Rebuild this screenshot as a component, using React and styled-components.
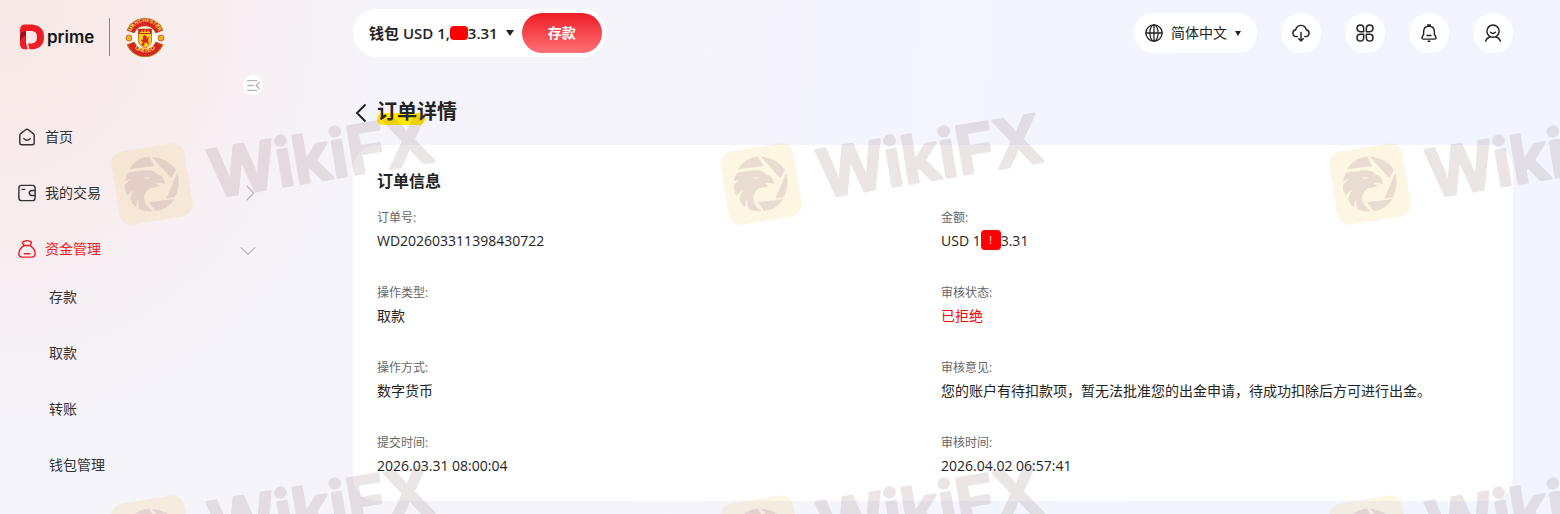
import React from 'react';
import styled, { createGlobalStyle, css } from 'styled-components';

const GlobalStyle = createGlobalStyle`
  * { box-sizing: border-box; }
  body {
    margin: 0;
    color: #232323;
    font: 14px/20px "Open Sans", "Noto Sans CJK SC", sans-serif;
  }
  button { font: inherit; color: inherit; }
  h1, h2, p, dl, dt, dd, ul { margin: 0; padding: 0; }
`;

const Page = styled.div`
  position: relative;
  display: flex;
  min-height: 100vh;
  overflow: hidden;
  background:
    radial-gradient(ellipse 380px 430px at 0 0, #f8e8e6 0, #f8ecec 45%, #f7f0f5 72%, rgba(246, 244, 251, 0) 100%),
    linear-gradient(95deg, #f6f4fb 40%, #f2f5ff 75%);
`;

const Sidebar = styled.aside`
  display: flex;
  flex-direction: column;
  flex: 0 0 280px;
  padding: 16px 16px 0 18px;
`;

const Brand = styled.a`
  display: flex;
  align-items: center;
  height: 42px;
  color: #151515;
  text-decoration: none;
`;

const BrandName = styled.span`
  width: 62px;
  margin-left: 3px;
  font: 600 17px/24px Inter, sans-serif;
`;

const BrandDivider = styled.span`
  width: 1px;
  height: 38px;
  margin-right: 15px;
  background: #8d8689;
`;

const CollapseButton = styled.button`
  display: grid;
  place-items: center;
  align-self: flex-end;
  width: 20px;
  height: 20px;
  margin: 17px 1px 28px 0;
  padding: 0;
  border: 0;
  border-radius: 50%;
  background: #fff;
  color: #b5b5b5;
`;

const Menu = styled.ul`
  display: flex;
  flex-direction: column;
  gap: 28px;
  list-style: none;
`;

const MenuLink = styled.a`
  display: flex;
  align-items: center;
  gap: 9px;
  height: 28px;
  padding-left: ${(p) => (p.$sub ? '31px' : '0')};
  color: ${(p) => (p.$active ? '#ee1c25' : '#333')};
  text-decoration: none;

  > svg:last-child:not(:first-child) {
    margin: 0 8px 0 auto;
    color: #bbb;
  }
`;

const SubMenu = styled.ul`
  display: flex;
  flex-direction: column;
  gap: 28px;
  margin-top: 20px;
  list-style: none;
`;

const Main = styled.main`
  flex: 1;
  min-width: 0;
  padding: 9px 47px 13px 73px;
`;

const TopBar = styled.header`
  display: flex;
  align-items: center;
  justify-content: space-between;
  height: 48px;
`;

const pill = css`
  display: flex;
  align-items: center;
  border: 0;
  border-radius: 24px;
  background: #fff;
`;

const Wallet = styled.div`
  ${pill}
  height: 48px;
  padding: 4px 4px 4px 16px;
`;

const WalletPicker = styled.button`
  display: flex;
  align-items: center;
  margin-right: 8px;
  padding: 0;
  border: 0;
  background: none;
  font-weight: 600;
  font-size: 15px;
  white-space: pre;
`;

const Redaction = styled.span`
  display: inline-grid;
  place-items: center;
  width: ${(p) => (p.$large ? '20px' : '18px')};
  height: ${(p) => (p.$large ? '20px' : '14px')};
  border-radius: 4px;
  background: #f00;
  color: #fff;
  font-size: 10px;
  line-height: 12px;
  vertical-align: text-bottom;
`;

const Caret = styled.span`
  margin-left: 8px;
  border: ${(p) => (p.$small ? '3px' : '4px')} solid transparent;
  border-top: ${(p) => (p.$small ? '5px' : '6px')} solid currentColor;
  border-bottom: 0;
`;

const DepositButton = styled.button`
  width: 80px;
  height: 40px;
  border: 0;
  border-radius: 20px;
  background: linear-gradient(#ee1c25, #ff7276);
  color: #fff;
  font-weight: 700;
`;

const Actions = styled.div`
  display: flex;
  align-items: center;
  gap: 24px;
  height: 40px;
`;

const Language = styled.button`
  ${pill}
  height: 40px;
  padding: 0 16px 0 11px;

  svg { margin-right: 8px; }
`;

const RoundButton = styled.button`
  ${pill}
  justify-content: center;
  width: 40px;
  height: 40px;
  padding: 0;
`;

const TitleRow = styled.div`
  display: flex;
  align-items: center;
  gap: 10px;
  height: 32px;
  margin: 39px 0 17px;
`;

const BackButton = styled.button`
  display: flex;
  padding: 2px 0 0 2px;
  border: 0;
  background: none;
`;

const Title = styled.h1`
  position: relative;
  z-index: 0;
  font-size: 20px;
  line-height: 32px;
  font-weight: 700;

  &::before {
    content: '';
    position: absolute;
    z-index: -1;
    left: 0;
    bottom: 3px;
    width: 48px;
    height: 12px;
    border-radius: 6px;
    background: #ffe600;
  }
`;

const Card = styled.section`
  padding: 24px 24px 23px;
  border-radius: 24px;
  background: #fff;
`;

const CardTitle = styled.h2`
  margin-bottom: 15px;
  font-size: 16px;
  line-height: 24px;
  font-weight: 600;
`;

const Details = styled.dl`
  display: grid;
  grid-template-columns: 1fr 1fr;
  column-gap: 16px;
  row-gap: 30px;
`;

const Term = styled.dt`
  color: #666;
  font-size: 12px;
  line-height: 20px;
`;

const Value = styled.dd`
  margin-top: 1px;
  color: ${(p) => (p.$danger ? '#f00' : '#232323')};
  font-size: 14px;
  line-height: 24px;
`;

const WatermarkLayer = styled.div`
  position: absolute;
  inset: 0;
  display: grid;
  grid-template-columns: repeat(3, 609px);
  grid-auto-rows: 352px;
  padding: 104px 0 0 104px;
  overflow: hidden;
  pointer-events: none;

  svg { overflow: visible; }
`;

const Icon = ({ size = 20, width = 1.6, children }) => (
  <svg width={size} height={size} viewBox="0 0 20 20" fill="none" stroke="currentColor"
    strokeWidth={width} strokeLinecap="round" strokeLinejoin="round" aria-hidden="true">
    {children}
  </svg>
);

const HomeIcon = () => (
  <Icon size={18}>
    <path d="M2 8.4Q2 7 3.1 6.2L8.8 1.7Q10 .9 11.2 1.7L16.9 6.2Q18 7 18 8.4V16.5Q18 18.6 15.9 18.6H4.1Q2 18.6 2 16.5Z" />
    <path d="M6.6 11.8Q10 15.4 13.4 11.8" />
  </Icon>
);
const TradeIcon = () => (
  <Icon size={18}>
    <rect x="1" y="1.5" width="18" height="17" rx="3" />
    <path d="M4.5 6H7.5M19 7.2H15.5Q12.5 7.5 12.5 10T15.5 12.8H19" />
  </Icon>
);
const FundsIcon = () => (
  <Icon size={18}>
    <path d="M6.800 6.200L5.400 4Q4.600 1.400 7.300 1.300Q8.700 .6 10 1Q11.300 .6 12.700 1.300Q15.400 1.400 14.600 4L13.200 6.200Z" />
    <path d="M6.800 6.200Q1 9.500 1 15.400Q1 19 4.500 19H15.500Q19 19 19 15.400Q19 9.500 13.200 6.200M7 15.200H13" />
  </Icon>
);
const ChevronRight = () => <Icon size={16}><path d="M9 1.5L17 10L9 18.5" /></Icon>;
const ChevronDown = () => <Icon size={16}><path d="M1.5 8.5L10 16.5L18.5 8.5" /></Icon>;
const CollapseIcon = () => (
  <Icon size={13} width={2}><path d="M1 2.5H15M1 10H10M1 17.5H15M19 5L14.500 10L19 15" /></Icon>
);
const GlobeIcon = () => (
  <Icon size={18} width={1.4}>
    <circle cx="10" cy="10" r="9" /><ellipse cx="10" cy="10" rx="4.600" ry="9" /><path d="M10 1V19M1 10H19" />
  </Icon>
);
const CloudIcon = () => (
  <Icon size={18}>
    <path d="M6 14H4.800Q1 13.500 1 10.200Q1 7 4.100 6.400Q5.300 1.500 10 1.500T15.900 6.400Q19 7 19 10.200Q19 13.500 15.200 14H14M10 9.500V19M7.500 16.500L10 19L12.500 16.500" />
  </Icon>
);
const GridIcon = () => (
  <Icon size={18} width={1.7}>
    <path d="M8.500 8.500H4.800A3.700 3.700 0 1 1 8.500 4.800ZM11.500 8.500V4.800A3.700 3.700 0 1 1 15.200 8.500ZM8.500 11.500V15.200A3.700 3.700 0 1 1 4.800 11.500ZM11.500 11.500H15.200A3.700 3.700 0 1 1 11.500 15.200Z" />
  </Icon>
);
const BellIcon = () => (
  <Icon size={18}>
    <path d="M4 9Q4 2.600 10 2.600T16 9V11.500L17.700 14.500Q18.200 16.800 16 16.800H4Q1.800 16.800 2.300 14.500L4 11.500ZM8.500 1.200H11.500M7.800 12.800H12.200M9 19.200H11" />
  </Icon>
);
const UserIcon = () => (
  <Icon size={18}>
    <circle cx="10" cy="8" r="6.800" /><path d="M7.300 9.200Q10 11.800 12.700 9.200M1.800 19Q3 15.400 7 14.200M18.200 19Q17 15.400 13 14.200" />
  </Icon>
);

const PrimeMark = () => (
  <svg width="26" height="26" viewBox="0 0 26 26" aria-hidden="true">
    <path fill="#ee1c25" d="M7 .5H14Q26 1.500 26 13T14 25.300H11.500L10 19.500H13.500Q19 19 19 13T13.500 7H8V12L2 15V6Q2 .5 7 .5Z" />
    <path fill="#ee1c25" d="M2 11H8V19.500L10 25.300H7Q2 25.300 2 20Z" />
    <path fill="#96121a" d="M2 12Q3 7.500 8 7V12Q4.500 12 2 17Z" />
  </svg>
);

const Crest = () => (
  <svg width="40" height="40" viewBox="0 0 40 40" aria-label="Manchester United" role="img">
    <defs>
      <path id="crest-top" d="M5.800 17.500A14.300 14.300 0 0 1 34.200 17.500" />
      <path id="crest-bottom" d="M4.500 24.500A16.500 16.500 0 0 0 35.500 24.500" />
    </defs>
    <circle cx="20" cy="20.500" r="13" fill="#fff" />
    <g fill="none">
      <path stroke="#b3862f" strokeWidth="8.500" d="M5.500 15A15.500 15.500 0 0 1 34.500 15M5.500 26A15.500 15.500 0 0 0 34.500 26" />
      <path stroke="#d8231f" strokeWidth="7" d="M6 14.500A15.200 15.200 0 0 1 34 14.500M6 26.500A15.200 15.200 0 0 0 34 26.500" />
    </g>
    <g fill="#f2b021" stroke="#c3571d" strokeWidth=".8">
      <circle cx="4" cy="21" r="3" /><circle cx="36" cy="21" r="3" />
      <circle cx="6" cy="8.500" r="1.400" /><circle cx="34" cy="8.500" r="1.400" />
      <path fill="#fbd116" d="M13.500 12H26.500V24Q26 29 20 31Q14 29 13.500 24Z" />
    </g>
    <path fill="#d8231f" d="M13.500 12H26.500V17H13.500Z" />
    <path stroke="#fbd116" strokeWidth="1.200" d="M15 15.500H25M17 13.200V15M20 12.500V15M23 13.200V15" />
    <path fill="#d8231f" d="M18 19L20 18L22 20L21 22L24 19.500L23 23.500L24 28L22 26L20 25L19 29L16 28L18 25.500L16 23L18 22.500Z" />
    <g fill="#fbd75a" fontFamily="Liberation Sans, sans-serif" fontWeight="700" textAnchor="middle">
      <text fontSize="5"><textPath href="#crest-top" startOffset="50%">MANCHESTER</textPath></text>
      <text fontSize="6"><textPath href="#crest-bottom" startOffset="50%">UNITED</textPath></text>
    </g>
  </svg>
);

const Watermark = () => (
  <svg width="352" height="140" viewBox="0 0 352 140" aria-hidden="true">
    <rect x="11" y="43" width="74" height="74" rx="12" fill="#f0c440" opacity=".15" transform="rotate(-9.500 48 80)" />
    <g transform="translate(1 34) scale(.3333)" fill="#855f80" opacity=".16" fillRule="evenodd">
      <path d="M72 94Q92 58 132 56L148 84Z" />
      <path d="M141 56Q187 60 213 95L199 121Z" />
      <path d="M217 104Q227 145 209 178L184 182Z" />
      <path d="M209 183Q185 217 151 219L132 193Z" />
      <path d="M61 131Q62 112 72 103L125 97Q150 97 155 108Q178 112 180 139Q168 132 153 135Q156 141 164 144Q150 151 138 149Q118 160 117 180Q119 203 143 219Q120 222 104 214Q97 197 101 180Q92 194 94 208Q80 199 76 184Q79 167 87 156Q73 164 68 173Q57 155 60 140Q68 129 78 124Q68 125 61 131ZM115 118Q125 127 134 120Q138 119 139 117Q128 120 115 118Z" />
    </g>
    <text x="106" y="104" fontFamily="Inter, sans-serif" fontWeight="600" fontSize="66" fill="#7f5a58"
      stroke="#7f5a58" strokeWidth="3" strokeLinejoin="round" opacity=".15" transform="rotate(-9.500 48 80)">WikiFX</text>
  </svg>
);

const details = [
  ['订单号:', 'WD202603311398430722'],
  ['金额:', <>USD 1<Redaction $large>!</Redaction>3.31</>],
  ['操作类型:', '取款'],
  ['审核状态:', '已拒绝', true],
  ['操作方式:', '数字货币'],
  ['审核意见:', '您的账户有待扣款项，暂无法批准您的出金申请，待成功扣除后方可进行出金。'],
  ['提交时间:', '2026.03.31 08:00:04'],
  ['审核时间:', '2026.04.02 06:57:41'],
];

export default function App() {
  return (
    <>
      <GlobalStyle />
      <Page>
        <Sidebar>
          <Brand href="#">
            <PrimeMark />
            <BrandName>prime</BrandName>
            <BrandDivider />
            <Crest />
          </Brand>
          <CollapseButton aria-label="收起菜单"><CollapseIcon /></CollapseButton>
          <nav>
            <Menu>
              <li><MenuLink href="#"><HomeIcon />首页</MenuLink></li>
              <li><MenuLink href="#"><TradeIcon />我的交易<ChevronRight /></MenuLink></li>
              <li>
                <MenuLink href="#" $active><FundsIcon />资金管理<ChevronDown /></MenuLink>
                <SubMenu>
                  {['存款', '取款', '转账', '钱包管理'].map((name) => (
                    <li key={name}><MenuLink href="#" $sub>{name}</MenuLink></li>
                  ))}
                </SubMenu>
              </li>
            </Menu>
          </nav>
        </Sidebar>
        <Main>
          <TopBar>
            <Wallet>
              <WalletPicker>钱包 USD 1,<Redaction />3.31<Caret /></WalletPicker>
              <DepositButton>存款</DepositButton>
            </Wallet>
            <Actions>
              <Language><GlobeIcon />简体中文<Caret $small /></Language>
              <RoundButton aria-label="下载"><CloudIcon /></RoundButton>
              <RoundButton aria-label="应用"><GridIcon /></RoundButton>
              <RoundButton aria-label="通知"><BellIcon /></RoundButton>
              <RoundButton aria-label="账户"><UserIcon /></RoundButton>
            </Actions>
          </TopBar>
          <TitleRow>
            <BackButton aria-label="返回">
              <svg width="12" height="20" viewBox="0 0 12 20" fill="none" stroke="currentColor" strokeWidth="2">
                <path d="M10.500 1.500L2 10L10.500 18.500" />
              </svg>
            </BackButton>
            <Title>订单详情</Title>
          </TitleRow>
          <Card>
            <CardTitle>订单信息</CardTitle>
            <Details>
              {details.map(([term, value, danger]) => (
                <div key={term}>
                  <Term>{term}</Term>
                  <Value $danger={danger}>{value}</Value>
                </div>
              ))}
            </Details>
          </Card>
        </Main>
        <WatermarkLayer>
          {[0, 1, 2, 3, 4, 5].map((i) => <Watermark key={i} />)}
        </WatermarkLayer>
      </Page>
    </>
  );
}
